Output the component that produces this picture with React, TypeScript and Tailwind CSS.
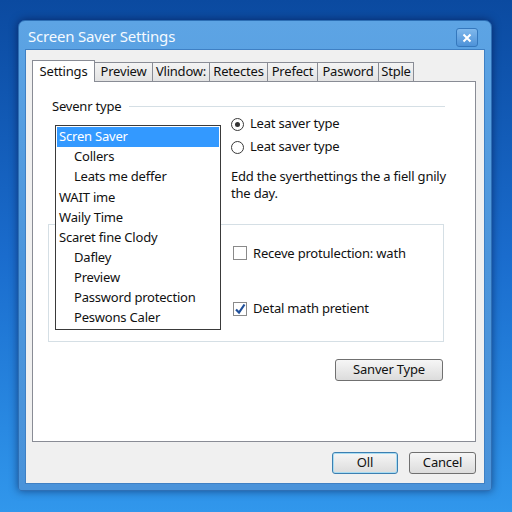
import React from "react";

const tabs = [
  { label: "Settings", w: "w-[63px]" },
  { label: "Preview", w: "w-[59px]" },
  { label: "Vlindow:", w: "w-[58px]" },
  { label: "Retectes", w: "w-[59px]" },
  { label: "Prefect", w: "w-[51px]" },
  { label: "Pasword", w: "w-[62px]" },
  { label: "Stple", w: "w-[36px]" },
];

const items = [
  { text: "Scren Saver", indent: false, selected: true },
  { text: "Collers", indent: true },
  { text: "Leats me deffer", indent: true },
  { text: "WAIT ime", indent: false },
  { text: "Waily Time", indent: false },
  { text: "Scaret fine Clody", indent: false },
  { text: "Dafley", indent: true },
  { text: "Preview", indent: true },
  { text: "Password protection", indent: true },
  { text: "Peswons Caler", indent: true },
];

function Radio({ checked }: { checked?: boolean }) {
  return (
    <span className="flex h-[13px] w-[13px] items-center justify-center rounded-full border border-[#3a3a3a] bg-white">
      {checked && <span className="h-[5px] w-[5px] rounded-full bg-[#333]" />}
    </span>
  );
}

function Check({ checked }: { checked?: boolean }) {
  return (
    <span className="flex h-[14px] w-[14px] items-center justify-center border border-[#8a8a8a] bg-white">
      {checked && (
        <svg width="12" height="12" viewBox="0 0 12 12">
          <path d="M2 6.5 L5 9.5 L10.5 1.5" fill="none" stroke="#1f4f9a" strokeWidth="2.2" />
        </svg>
      )}
    </span>
  );
}

function Btn({ children, primary, w }: { children: React.ReactNode; primary?: boolean; w: string }) {
  return (
    <div
      className={`flex h-[22px] ${w} items-center justify-center rounded-[3px] border bg-gradient-to-b from-[#f6f6f6] to-[#dcdcdc] text-[13px] text-[#111] ${
        primary ? "border-[#3c7fb1] shadow-[inset_0_0_0_1px_#a8dcf2]" : "border-[#707070]"
      }`}
    >
      {children}
    </div>
  );
}

export default function App() {
  return (
    <div
      className="h-[512px] w-[512px] overflow-hidden bg-gradient-to-b from-[#0b4aa0] via-[#1a6ccd] to-[#3197ec] pl-[18px] pt-[20px] tracking-[-0.2px]"
      style={{ fontFamily: '"Noto Sans", "Open Sans", sans-serif' }}
    >
      <div className="flex h-[471px] w-[474px] flex-col rounded-t-[7px] rounded-b-[3px] border border-[#2d6fb5] bg-gradient-to-b from-[#5da4e4] via-[#4d96dc] to-[#4a93da] shadow-[0_0_8px_rgba(0,0,40,0.5)]">
        {/* title bar */}
        <div className="flex h-[28px] items-center justify-between pl-[9px] pr-[13px]">
          <span className="mt-[3px] text-[15px] text-[#f4faff]">Screen Saver Settings</span>
          <div className="mt-[5px] flex h-[19px] w-[22px] items-center justify-center rounded-[3px] border border-[#3578bd] bg-gradient-to-b from-[#7fb8ec] to-[#4d92d8]">
            <svg width="10" height="10" viewBox="0 0 10 10">
              <path d="M1.5 1.5 L8.5 8.5 M8.5 1.5 L1.5 8.5" stroke="white" strokeWidth="2" />
            </svg>
          </div>
        </div>

        {/* client area */}
        <div className="mx-[6px] flex h-[435px] flex-col border border-[#3f80c4] bg-[#f0f0f0] px-[6px] pt-[10px] text-[13px] text-[#111]">
          {/* tabs */}
          <div className="flex h-[21px] items-end">
            {tabs.map((t, i) =>
              i === 0 ? (
                <div
                  key={t.label}
                  className={`relative z-10 -mb-px flex h-[22px] ${t.w} items-center justify-center border border-b-0 border-[#898c95] bg-white`}
                >
                  {t.label}
                </div>
              ) : (
                <div
                  key={t.label}
                  className={`-ml-px flex h-[19px] ${t.w} items-center justify-center border border-b-0 border-[#898c95] bg-gradient-to-b from-[#f4f4f4] to-[#e3e3e3]`}
                >
                  {t.label}
                </div>
              )
            )}
          </div>

          {/* tab panel */}
          <div className="relative h-[361px] w-[444px] border border-[#898c95] bg-white">
            <div className="flex items-center pl-[19px] pr-[30px] pt-[15px]">
              <span className="mr-[8px]">Sevenr type</span>
              <div className="h-px flex-1 bg-[#d5dfe5]" />
            </div>

            <div className="ml-[198px] mt-[-4px] flex flex-col">
              <div className="flex h-[23px] items-center gap-[6px]">
                <Radio checked />
                <span>Leat saver type</span>
              </div>
              <div className="flex h-[23px] items-center gap-[6px]">
                <Radio />
                <span>Leat saver type</span>
              </div>
              <p className="mt-[9px] w-[222px] leading-[17px]">Edd the syerthettings the a fiell gnily the day.</p>
            </div>

            {/* group box */}
            <div className="ml-[15px] mt-[22px] flex h-[118px] w-[396px] flex-col border border-[#d5dfe5] pl-[184px] pt-[19px]">
              <div className="flex items-center gap-[6px]">
                <Check />
                <span>Receve protulection: wath</span>
              </div>
              <div className="mt-[36px] flex items-center gap-[6px]">
                <Check checked />
                <span>Detal math pretient</span>
              </div>
            </div>

            <div className="mr-[32px] mt-[17px] flex justify-end">
              <Btn w="w-[108px]">Sanver Type</Btn>
            </div>

            {/* listbox overlay */}
            <div className="absolute left-[22px] top-[43px] z-10 flex h-[205px] w-[166px] flex-col border border-[#3a3a3a] bg-white p-px">
              {items.map((it) => (
                <div
                  key={it.text}
                  className={`flex h-[20.5px] items-center ${it.indent ? "pl-[17px]" : "pl-[2px]"} ${
                    it.selected ? "bg-[#3399ff] text-white" : ""
                  }`}
                >
                  {it.text}
                </div>
              ))}
            </div>
          </div>

          {/* buttons */}
          <div className="mt-[10px] flex justify-end gap-[11px] pr-[2px]">
            <Btn w="w-[66px]" primary>
              Oll
            </Btn>
            <Btn w="w-[67px]">Cancel</Btn>
          </div>
        </div>
      </div>
    </div>
  );
}
